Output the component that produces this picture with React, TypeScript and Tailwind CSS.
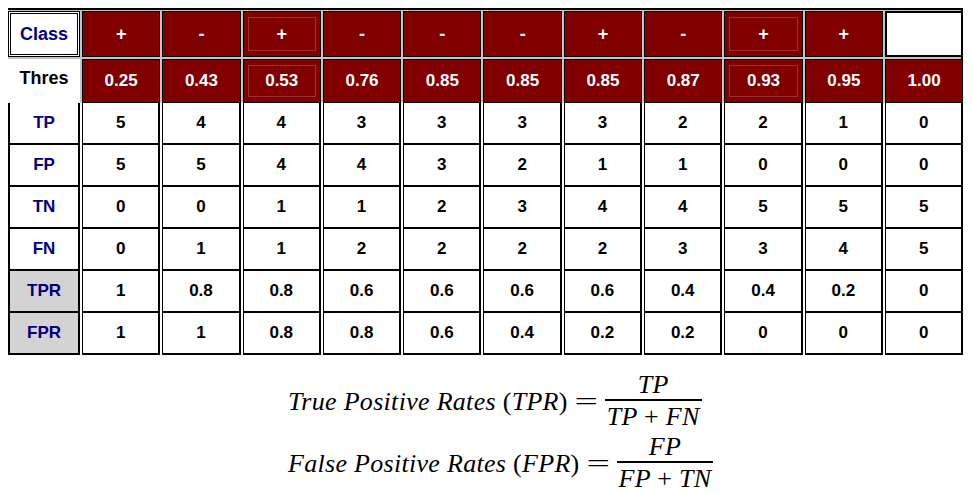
const classes = ["+", "-", "+", "-", "-", "-", "+", "-", "+", "+", ""];
const thres = ["0.25", "0.43", "0.53", "0.76", "0.85", "0.85", "0.85", "0.87", "0.93", "0.95", "1.00"];

const rows: { label: string; gray?: boolean; values: string[] }[] = [
  { label: "TP", values: ["5", "4", "4", "3", "3", "3", "3", "2", "2", "1", "0"] },
  { label: "FP", values: ["5", "5", "4", "4", "3", "2", "1", "1", "0", "0", "0"] },
  { label: "TN", values: ["0", "0", "1", "1", "2", "3", "4", "4", "5", "5", "5"] },
  { label: "FN", values: ["0", "1", "1", "2", "2", "2", "2", "3", "3", "4", "5"] },
  { label: "TPR", gray: true, values: ["1", "0.8", "0.8", "0.6", "0.6", "0.6", "0.6", "0.4", "0.4", "0.2", "0"] },
  { label: "FPR", gray: true, values: ["1", "1", "0.8", "0.8", "0.6", "0.4", "0.2", "0.2", "0", "0", "0"] },
];

// columns with the faint inset box in the header
const boxed = [2, 8];

function HeaderCell({ text, index }: { text: string; index: number }) {
  if (text === "" && index === 10) {
    return <div className="border-2 border-black bg-white" />;
  }
  return (
    <div className="flex items-center justify-center border border-black bg-[#800000] px-[4px] py-[5px]">
      <div
        className={
          "flex h-full w-full items-center justify-center border " +
          (boxed.includes(index) ? "border-white/20" : "border-transparent")
        }
      >
        {text}
      </div>
    </div>
  );
}

function Fraction({ top, bottom }: { top: React.ReactNode; bottom: React.ReactNode }) {
  return (
    <div className="flex flex-col items-stretch">
      <div className="border-b-2 border-black px-[2px] pb-[3px] text-center leading-[22px]">{top}</div>
      <div className="px-[2px] pt-[5px] text-center leading-[22px]">{bottom}</div>
    </div>
  );
}

function Up({ children }: { children: React.ReactNode }) {
  return <span className="not-italic">{children}</span>;
}

function Eq() {
  return <span className="mx-[11px] inline-block scale-x-[1.6] not-italic">=</span>;
}

export default function App() {
  const grid = "grid grid-cols-[72px_repeat(11,78.3px)] gap-x-[2px]";
  return (
    <div className="min-h-screen w-[973px] bg-white font-['Liberation_Sans',Arial,sans-serif] font-bold">
      <div className="pl-[8px] pt-[8px]">
        <div className="w-[955px] border-t-2 border-r-2 border-black bg-[#c4c4c4] pt-px">
          <div className={grid + " h-[46px] text-[18px] text-white"}>
            <div className="flex items-center justify-center border-[3px] border-double border-black bg-white text-[18px] text-[#000080]">
              Class
            </div>
            {classes.map((c, i) => (
              <HeaderCell key={i} text={c} index={i} />
            ))}
          </div>
          <div className={grid + " mt-[2px] h-[44px] text-[17px] text-white"}>
            <div className="flex items-center justify-center bg-white pb-[6px] text-[18px] text-black">Thres</div>
            {thres.map((t, i) => (
              <HeaderCell key={i} text={t} index={i} />
            ))}
          </div>
        </div>
        <div className="w-[955px] border-r-2 border-[#9a9a9a] bg-white">
          {rows.map((r) => (
            <div key={r.label} className={grid + " h-[42px] text-[17px] text-black"}>
              <div
                className={
                  "flex items-center justify-center border-x-2 border-b-2 border-black text-[#000080] " +
                  (r.gray ? "bg-[#d3d3d3]" : "bg-white")
                }
              >
                {r.label}
              </div>
              {r.values.map((v, i) => (
                <div
                  key={i}
                  className="flex items-center justify-center border-b-2 border-l border-r-2 border-black"
                >
                  {v}
                </div>
              ))}
            </div>
          ))}
        </div>
      </div>

      <div className="ml-[288px] mt-[19px] flex flex-col font-['Liberation_Serif','Times_New_Roman',serif] text-[26px] font-normal italic tracking-[0.3px] text-black">
        <div className="flex items-center">
          <span>
            True Positive Rates <Up>(</Up>TPR<Up>)</Up>
          </span>
          <Eq />
          <Fraction top="TP" bottom={<>TP <Up>+</Up> FN</>} />
        </div>
        <div className="mt-[8px] flex items-center">
          <span>
            False Positive Rates <Up>(</Up>FPR<Up>)</Up>
          </span>
          <Eq />
          <Fraction top="FP" bottom={<>FP <Up>+</Up> TN</>} />
        </div>
      </div>
    </div>
  );
}
